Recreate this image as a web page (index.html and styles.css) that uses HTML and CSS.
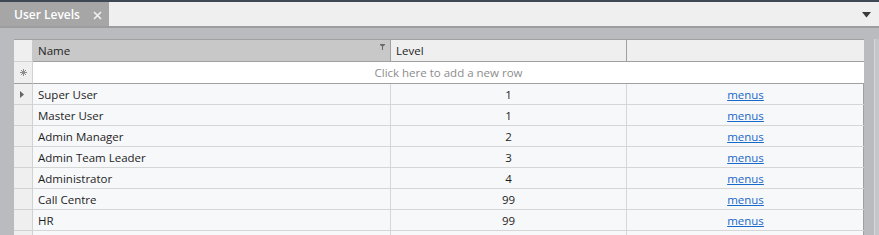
FILE: index.html
```html
<!DOCTYPE html>
<html>
<head>
<meta charset="utf-8">
<link rel="stylesheet" href="styles.css">
</head>
<body>
<div class="window">
  <div class="topline"></div>
  <div class="tabstrip">
    <div class="tab"><span class="tab-title">User Levels</span><svg class="tab-close" width="9" height="9" viewBox="0 0 9 9"><path d="M1 1L8 8M8 1L1 8" stroke="#f2f2f2" stroke-width="1.6"/></svg></div>
    <div class="tab-spacer"></div>
    <svg class="tab-menu" width="9" height="6" viewBox="0 0 9 6"><path d="M0 0H9L4.5 5.5Z" fill="#3a3a3a"/></svg>
  </div>
  <div class="tabline"></div>
  <div class="content">
    <div class="grid">
      <div class="hdr ind"></div>
      <div class="hdr name sorted">Name<svg class="filter" width="5" height="6" viewBox="0 0 5 6"><path d="M0 0H5V1L3 2.6V6H2V2.6L0 1Z" fill="#6a6a6a"/></svg></div>
      <div class="hdr">Level</div>
      <div class="hdr last"></div>

      <div class="ind newind"><svg width="7" height="7" viewBox="0 0 7 7"><path d="M3.5 0V7M0 3.5H7M1 1L6 6M6 1L1 6" stroke="#8c8c8c" stroke-width="1"/></svg></div>
      <div class="newrow">Click here to add a new row</div>

      <div class="ind cur"><svg width="4" height="7" viewBox="0 0 4 7"><path d="M0 0L4 3.5L0 7Z" fill="#666"/></svg></div>
      <div class="cell">Super User</div><div class="cell c">1</div><div class="cell c last"><a href="#">menus</a></div>

      <div class="ind"></div>
      <div class="cell">Master User</div><div class="cell c">1</div><div class="cell c last"><a href="#">menus</a></div>

      <div class="ind"></div>
      <div class="cell">Admin Manager</div><div class="cell c">2</div><div class="cell c last"><a href="#">menus</a></div>

      <div class="ind"></div>
      <div class="cell">Admin Team Leader</div><div class="cell c">3</div><div class="cell c last"><a href="#">menus</a></div>

      <div class="ind"></div>
      <div class="cell">Administrator</div><div class="cell c">4</div><div class="cell c last"><a href="#">menus</a></div>

      <div class="ind"></div>
      <div class="cell">Call Centre</div><div class="cell c">99</div><div class="cell c last"><a href="#">menus</a></div>

      <div class="ind"></div>
      <div class="cell">HR</div><div class="cell c">99</div><div class="cell c last"><a href="#">menus</a></div>

      <div class="ind"></div>
      <div class="cell"></div><div class="cell c"></div><div class="cell c last"></div>
    </div>
    <div class="rightedge"></div>
  </div>
</div>
</body>
</html>
```
FILE: styles.css
```css
html, body {
  margin: 0;
  padding: 0;
  width: 879px;
  height: 235px;
  overflow: hidden;
  background: #b9bbbf;
  font-family: "Open Sans", "Noto Sans", sans-serif;
  font-size: 11.5px;
  color: #1e1e1e;
}
.window {
  display: flex;
  flex-direction: column;
  height: 235px;
}
.topline {
  height: 2px;
  background: #3e4852;
}
.tabstrip {
  display: flex;
  align-items: stretch;
  height: 24px;
  background: #efefef;
}
.tab {
  width: 109px;
  background: #a6a6a6;
  display: flex;
  align-items: center;
  box-sizing: border-box;
  padding-left: 14px;
  padding-top: 1px;
  color: #ffffff;
}
.tab-title {
  font-weight: 600;
  font-size: 12px;
}
.tab-close {
  margin-left: 13px;
  margin-top: 1px;
}
.tab-spacer { flex: 1; }
.tab-menu {
  align-self: center;
  margin-right: 8px;
  margin-top: 1px;
}
.tabline {
  height: 2px;
  background: #9d9d9d;
}
.content {
  flex: 1;
  display: flex;
  padding: 11px 0 0 14px;
  overflow: hidden;
}
.grid {
  display: grid;
  grid-template-columns: 19px 358px 236px 237px;
  grid-auto-rows: 21px;
  grid-template-rows: 22px 22px;
  width: 850px;
  box-sizing: border-box;
  border-top: 1px solid #a0a0a0;
  border-right: 1px solid #a0a0a0;
  background: #f7f8fa;
  align-self: flex-start;
}
.hdr {
  background: #efefef;
  border-right: 1px solid #a0a0a0;
  border-bottom: 1px solid #a0a0a0;
  display: flex;
  align-items: center;
  padding-left: 5px;
  box-sizing: border-box;
  position: relative;
}
.hdr.ind { padding: 0; border-right: 1px solid #c8c8c8; }
.hdr.sorted { background: #c8c8c8; }
.hdr.last { border-right: none; }
.filter {
  position: absolute;
  right: 5px;
  top: 4px;
}
.ind {
  background: #efefef;
  border-right: 1px solid #d2d2d2;
  border-bottom: 1px solid #d2d2d2;
  box-sizing: border-box;
  display: flex;
  align-items: center;
  justify-content: center;
}
.newind {
  border-bottom: 1px solid #a0a0a0;
}
.cur svg { margin-left: -2px; }
.newrow {
  grid-column: 2 / 5;
  background: #ffffff;
  border-bottom: 1px solid #a0a0a0;
  display: flex;
  align-items: center;
  justify-content: center;
  color: #8d8d8d;
  box-sizing: border-box;
}
.cell {
  border-right: 1px solid #d6d6d6;
  border-bottom: 1px solid #d6d6d6;
  box-sizing: border-box;
  display: flex;
  align-items: center;
  padding-left: 5px;
  white-space: nowrap;
}
.cell.c {
  justify-content: center;
  padding-left: 0;
}
.cell.last { border-right: none; }
.cell a {
  color: #1768c8;
  text-decoration: underline;
}
.rightedge {
  width: 4px;
  margin-left: auto;
  background: #c4c6c9;
  border-left: 1px solid #d8d8d8;
}
```
